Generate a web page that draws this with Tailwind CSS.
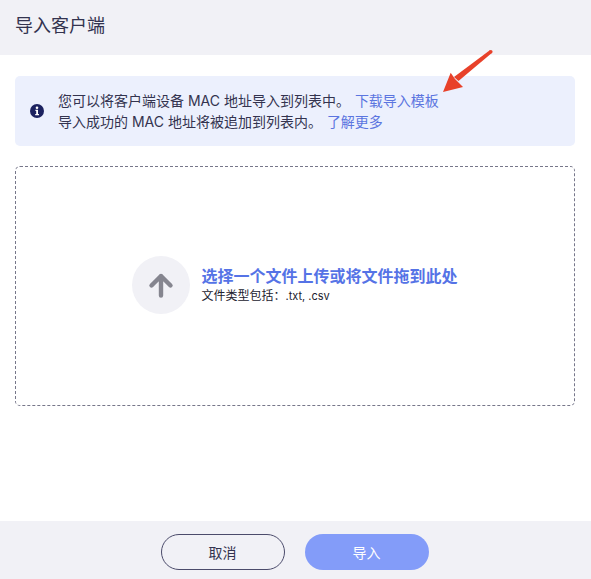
<!DOCTYPE html>
<html>
<head>
<meta charset="utf-8">
<script src="https://cdn.jsdelivr.net/npm/@tailwindcss/browser@4"></script>
</head>
<body class="bg-white">
<div class="relative w-[591px] h-[579px] flex flex-col overflow-hidden bg-white text-[#33334f] font-['Inter','Noto_Sans_CJK_SC',sans-serif]">
  <header class="h-[55px] shrink-0 bg-[#f1f1f6] px-[15px] flex items-center text-[18px] leading-[24px] pb-[4px]">导入客户端</header>
  <main class="flex-1 pl-[15px] pr-[16px] pt-[21px] flex flex-col">
    <div class="h-[70px] rounded-[5px] bg-[#ecf0fd] flex items-center pl-[15px] text-[14px] leading-[21px]">
      <svg class="w-[14px] h-[14px] shrink-0" viewBox="0 0 14 14"><circle cx="7" cy="7" r="7" fill="#1c2260"/><circle cx="7" cy="3.7" r="1.300" fill="#fff"/><path d="M5.400 5.800H8V10H9V11.200H5.200V10H6.200V7H5.400Z" fill="#fff"/></svg>
      <div class="ml-[14px]">
        <p class="whitespace-pre">您可以将客户端设备 MAC 地址导入到列表中。 <span class="text-[#5b75e0] ml-[1px]">下载导入模板</span></p>
        <p class="whitespace-pre">导入成功的 MAC 地址将被追加到列表内。 <span class="text-[#5b75e0] ml-[1px]">了解更多</span></p>
      </div>
    </div>
    <div class="mt-[20px] h-[240px] rounded-[5px] border border-dashed border-[#77778a] flex items-center justify-center pb-[2px]">
      <div class="w-[58px] h-[58px] rounded-full bg-[#f1f1f6] flex items-center justify-center mr-[12px]">
        <svg class="w-[26px] h-[26px]" viewBox="0 0 26 26" fill="none" stroke="#85858f" stroke-width="4.400" stroke-linecap="round" stroke-linejoin="round"><path d="M13 23.500V4M3.500 13.500L13 4l9.500 9.500"/></svg>
      </div>
      <div class="w-[257px]">
        <p class="text-[16px] leading-[21px] font-bold text-[#5573e6] whitespace-nowrap">选择一个文件上传或将文件拖到此处</p>
        <p class="text-[12px] leading-[16px] mt-[1px] text-[#22222e] whitespace-nowrap">文件类型包括：<span class="text-[11px]">.txt, .csv</span></p>
      </div>
    </div>
  </main>
  <footer class="h-[58px] shrink-0 bg-[#f1f1f6] flex items-center justify-center gap-[20px] pt-[4px] pr-[2px]">
    <button class="w-[124px] h-[36px] rounded-full border border-[#4b4b6b] text-[14px]">取消</button>
    <button class="w-[124px] h-[36px] rounded-full bg-[#839cf9] text-white text-[14px]">导入</button>
  </footer>
  <svg class="absolute left-[442px] top-[48px] w-[52px] h-[46px]" viewBox="0 0 52 46"><path d="M47.800 2.300L49.800 5L16.500 33L12 29Z" fill="#e8412a"/><circle cx="48.800" cy="3.700" r="1.800" fill="#e8412a"/><path d="M1 44L8.700 24.700L13 31L21 39Z" fill="#e8412a"/></svg>
</div>
</body>
</html>
